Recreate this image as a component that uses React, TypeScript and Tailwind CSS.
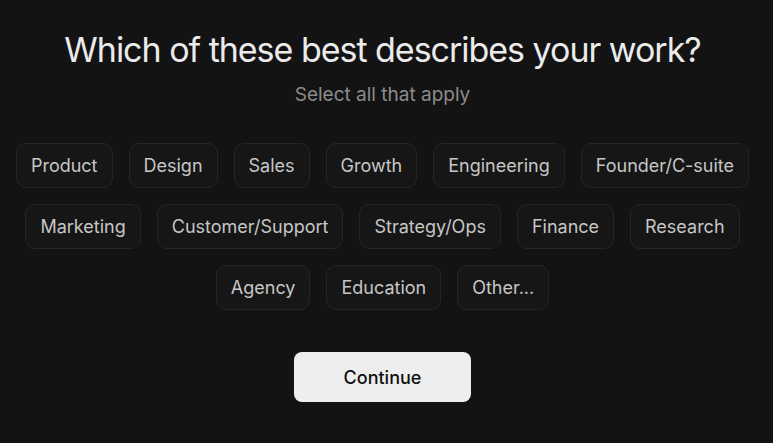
import React from "react";

const rows = [
  "Product","Design","Sales","Growth","Engineering","Founder/C-suite",
  "Marketing","Customer/Support","Strategy/Ops","Finance","Research",
  "Agency","Education","Other...",
];

export default function App() {
  return (
    <div className="w-[773px] h-[443px] bg-[#131313] overflow-hidden" style={{ fontFamily: "Inter, 'Noto Sans', sans-serif" }}>
      <div className="w-[765px] flex flex-col items-center pt-[28px]">
        <h1 className="text-[34px] leading-[44px] font-normal text-[#ebebeb] tracking-[-0.03em]">
          Which of these best describes your work?
        </h1>
        <p className="mt-[10px] text-[19px] leading-[26px] text-[#8c8c8c]">Select all that apply</p>
        <div className="mt-[35px] w-[740px] flex flex-wrap justify-center gap-x-4 gap-y-4">
          {rows.map((r) => (
            <button
              key={r}
              className="h-[45px] px-[14px] rounded-[10px] border border-[#262626] bg-[#161616] text-[18px] text-[#c6c6c6]"
            >
              {r}
            </button>
          ))}
        </div>
        <button className="mt-[42px] w-[177px] h-[50px] rounded-[8px] bg-[#eeeeee] text-[18px] text-[#111111] font-medium">
          Continue
        </button>
      </div>
    </div>
  );
}
